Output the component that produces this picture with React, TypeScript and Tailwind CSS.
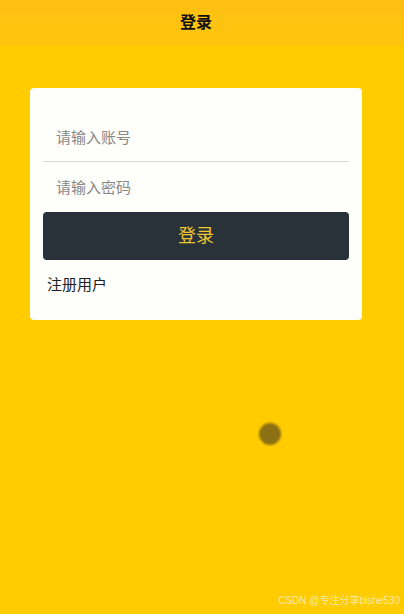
import React from 'react';

const font = { fontFamily: '"Liberation Sans", "Noto Sans CJK SC", sans-serif' };

const LoginPage = () => {
  return (
    <div className="relative h-[614px] w-[404px] overflow-hidden bg-[#ffcc00]" style={font}>
      <div className="h-[46px] bg-gradient-to-b from-[#fdbf13] to-[#ffc60c]">
        <div className="flex h-full w-[392px] items-center justify-center">
          <h1 className="text-[16px] font-bold text-[#111]">登录</h1>
        </div>
      </div>
      <div className="w-[392px] px-[30px] pt-[42px]">
        <div className="rounded-[4px] bg-[#fefefb] px-[13px] pt-[26px] pb-[23px]">
          <input
            type="text"
            placeholder="请输入账号"
            className="block h-[48px] w-full border-b border-[#d8d8d4] bg-transparent px-[13px] text-[15px] text-[#333] outline-none placeholder:text-[#888]"
          />
          <input
            type="password"
            placeholder="请输入密码"
            className="block h-[50px] w-full bg-transparent px-[13px] text-[15px] text-[#333] outline-none placeholder:text-[#888]"
          />
          <button className="block h-[48px] w-full rounded-[4px] bg-[#283238] text-[18px] text-[#edc632]">
            登录
          </button>
          <div className="mt-[14px] px-[4px] text-[15px] text-[#222]">注册用户</div>
        </div>
      </div>
      <div className="absolute left-[259px] top-[423px] h-[22px] w-[22px] rounded-full bg-[#8c7014] blur-[1px]" />
      <div className="absolute bottom-[6px] right-[4px] text-[10px] text-[#f8e9a8]">CSDN @专注分享bishe530</div>
    </div>
  );
};

export default LoginPage;
